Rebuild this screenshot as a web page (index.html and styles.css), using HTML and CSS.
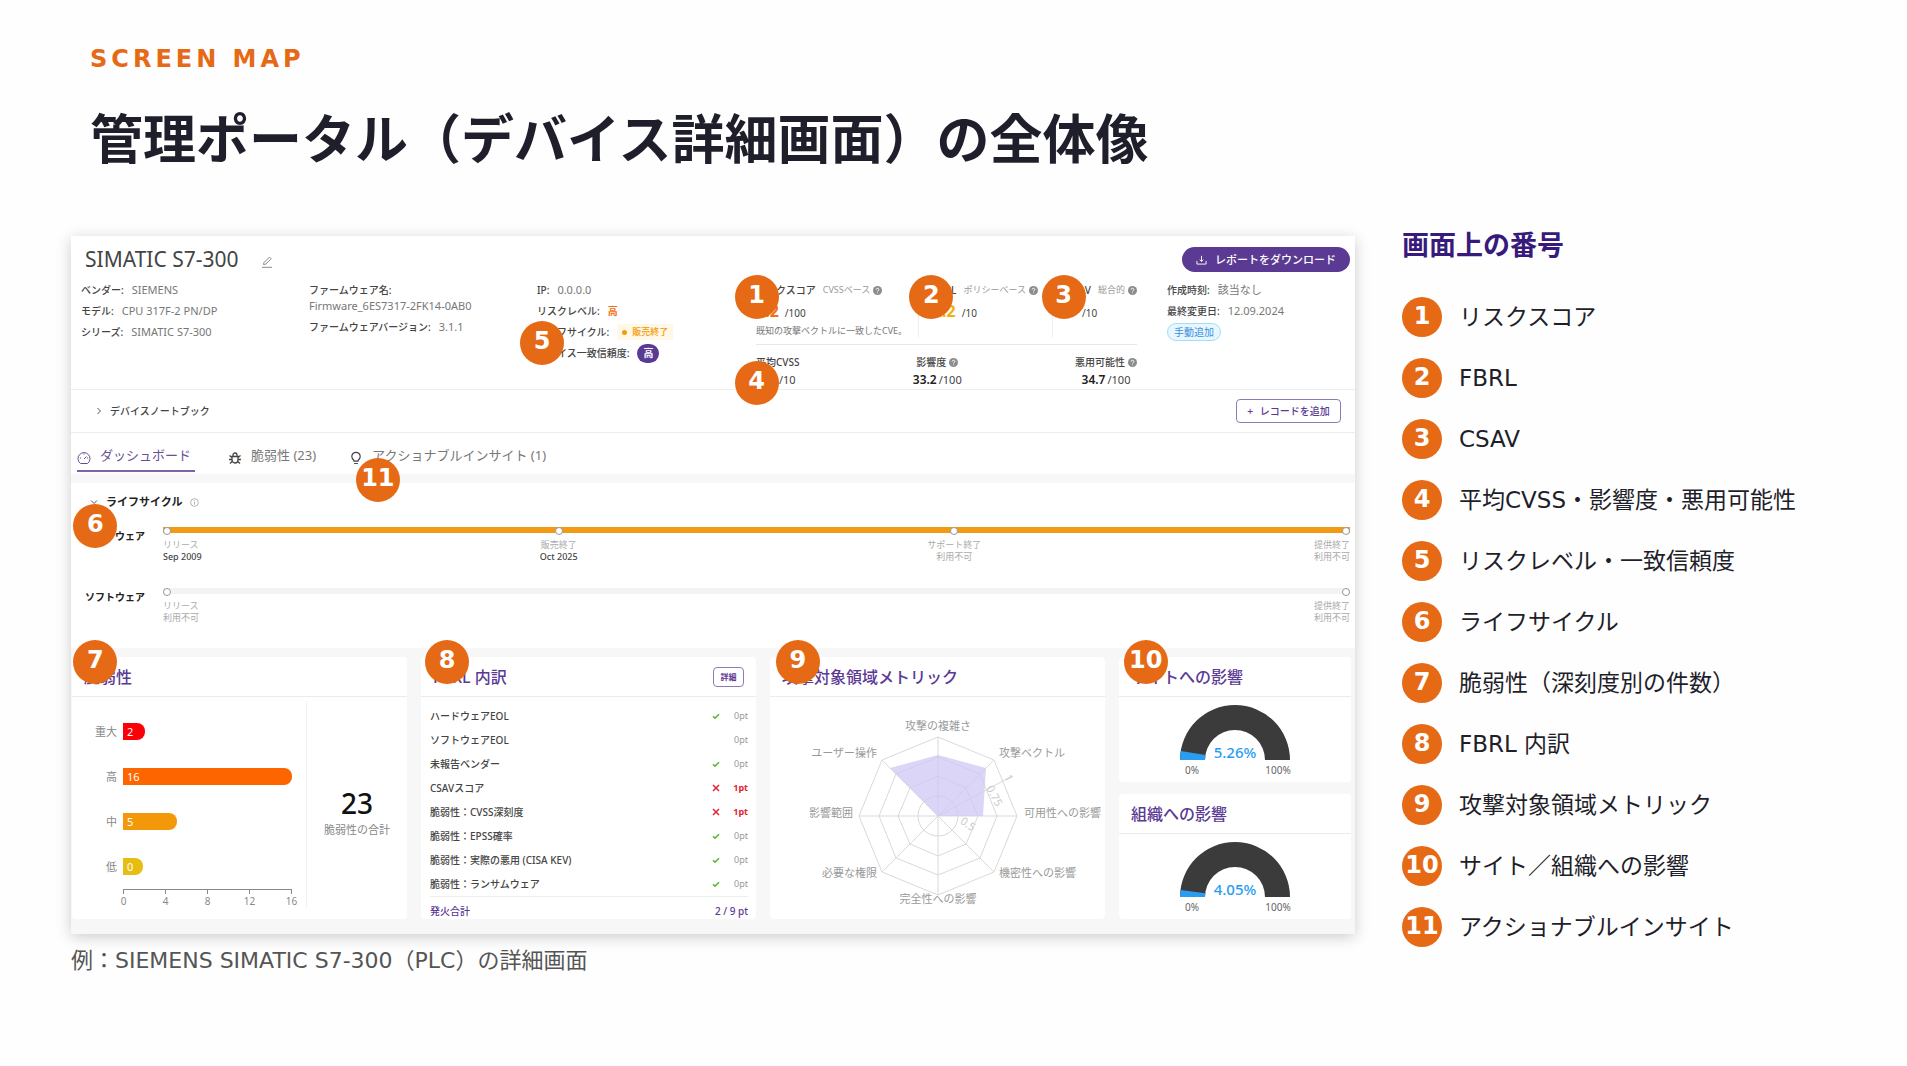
FILE: index.html
```html
<!DOCTYPE html>
<html lang="ja">
<head>
<meta charset="utf-8">
<meta name="viewport" content="width=device-width, initial-scale=1">
<title>管理ポータル（デバイス詳細画面）の全体像</title>
<link rel="stylesheet" href="styles.css">
</head>
<body>
<svg class="defs" width="0" height="0" aria-hidden="true">
  <symbol id="help" viewBox="0 0 10 10"><circle cx="5" cy="5" r="5" fill="#8c8c8c"/><path d="M3.500 4a1.500 1.500 0 1 1 2.200 1.300Q5 5.600 5 6.200M5 7.300v.8" fill="none" stroke="#fff" stroke-width="1"/></symbol>
  <symbol id="check" viewBox="0 0 8 8"><path d="M1 4.200 3 6.200 7 2.200" fill="none" stroke="#52b52a" stroke-width="1.500"/></symbol>
  <symbol id="cross" viewBox="0 0 8 8"><path d="M1 1l6 6M7 1 1 7" fill="none" stroke="#e0252f" stroke-width="1.500"/></symbol>
</svg>

<header class="head">
  <p class="eyebrow">SCREEN MAP</p>
  <h1>管理ポータル（デバイス詳細画面）の全体像</h1>
</header>

<main class="layout">
  <figure class="shot">
    <div class="portal">
      <section class="device">
        <div class="device-top">
          <h2>SIMATIC S7-300</h2>
          <svg class="pencil" viewBox="0 0 12 12" fill="none" stroke="#8a8a8a"><path d="M2.500 8.500 3 6.500 8.500 1l1.700 1.700-5.500 5.500zM1 11.300h10"/></svg>
          <button class="download" type="button"><svg viewBox="0 0 12 12" fill="none" stroke="#fff"><path d="M6 2v6M4 6.200l2 2 2-2M1 7.500V11h10V7.500"/></svg>レポートをダウンロード</button>
        </div>
        <div class="info">
          <dl>
            <div><dt>ベンダー:</dt><dd>SIEMENS</dd></div>
            <div><dt>モデル:</dt><dd>CPU 317F-2 PN/DP</dd></div>
            <div><dt>シリーズ:</dt><dd>SIMATIC S7-300</dd></div>
          </dl>
          <dl>
            <div class="stacked"><dt>ファームウェア名:</dt><dd>Firmware_6ES7317-2FK14-0AB0</dd></div>
            <div><dt>ファームウェアバージョン:</dt><dd>3.1.1</dd></div>
          </dl>
          <dl>
            <div><dt>IP:</dt><dd>0.0.0.0</dd></div>
            <div><dt>リスクレベル:</dt><dd class="level">高</dd></div>
            <div><dt>ライフサイクル:</dt><dd class="eos">販売終了</dd></div>
            <div><dt>デバイス一致信頼度:</dt><dd class="pill">高</dd></div>
          </dl>
          <div class="scores">
            <div class="score-row">
              <div class="score">
                <p class="score-name">リスクスコア <small>CVSSベース</small><svg class="help"><use href="#help"/></svg></p>
                <p class="score-value high"><b>7.2</b> /100</p>
                <p class="score-note">既知の攻撃ベクトルに一致したCVE。</p>
              </div>
              <div class="score">
                <p class="score-name">FBRL <small>ポリシーベース</small><svg class="help"><use href="#help"/></svg></p>
                <p class="score-value mid"><b>2.2</b> /10</p>
              </div>
              <div class="score">
                <p class="score-name">CSAV <small>総合的</small><svg class="help"><use href="#help"/></svg></p>
                <p class="score-value high"><b>8</b> /10</p>
              </div>
            </div>
            <div class="averages">
              <div><p>平均CVSS</p><p class="avg"><b>7.2</b>/10</p></div>
              <div><p>影響度<svg class="help"><use href="#help"/></svg></p><p class="avg"><b>33.2</b>/100</p></div>
              <div><p>悪用可能性<svg class="help"><use href="#help"/></svg></p><p class="avg"><b>34.7</b>/100</p></div>
            </div>
          </div>
          <dl>
            <div><dt>作成時刻:</dt><dd>該当なし</dd></div>
            <div><dt>最終変更日:</dt><dd>12.09.2024</dd></div>
            <div><dd class="manual">手動追加</dd></div>
          </dl>
        </div>
        <div class="notebook">
          <svg class="chev" viewBox="0 0 8 8" fill="none" stroke="#555"><path d="M2.500 1 5.500 4l-3 3"/></svg>
          <span>デバイスノートブック</span>
          <button class="add" type="button"><span>+</span>レコードを追加</button>
        </div>
        <nav class="tabs">
          <a class="tab active" href="#dashboard"><svg viewBox="0 0 14 14" fill="none" stroke="currentColor"><path d="M3.500 12.500a6 6 0 1 1 7 0zM7 8l2.500-2.500M7 2.500v1M3 7h1M10 7h1"/></svg>ダッシュボード</a>
          <a class="tab" href="#vulns"><svg viewBox="0 0 14 14" fill="none" stroke="#444" stroke-width="1.300"><path d="M4 5.500h6V9a3 3 0 0 1-6 0zM5 5.200V4a2 2 0 0 1 4 0v1.200M4 6.500 1.500 4.500M10 6.500l2.500-2M4 8.500H1M10 8.500h3M4.200 10.500 2 12.500M9.800 10.500l2.200 2"/></svg>脆弱性 (23)</a>
          <a class="tab" href="#insights"><svg viewBox="0 0 14 14" fill="none" stroke="#444" stroke-width="1.200"><path d="M5 10.200V9.500C4 8.500 2.800 7.500 2.800 5.500a4.200 4.200 0 0 1 8.400 0c0 2-1.200 3-2.200 4v.7zM5.200 12.500h3.600"/></svg>アクショナブルインサイト (1)</a>
        </nav>
      </section>

      <section class="lifecycle">
        <h3><svg class="chev" viewBox="0 0 8 8" fill="none" stroke="#555"><path d="M1 2.500 4 5.500l3-3"/></svg>ライフサイクル<svg class="i" viewBox="0 0 10 10" fill="none" stroke="#aaa"><circle cx="5" cy="5" r="4.300"/><path d="M5 4.300v3M5 2.500v1"/></svg></h3>
        <div class="track-row">
          <span>ハードウェア</span>
          <ol class="track on">
            <li>リリース<b>Sep 2009</b></li>
            <li>販売終了<b>Oct 2025</b></li>
            <li>サポート終了<i>利用不可</i></li>
            <li>提供終了<i>利用不可</i></li>
          </ol>
        </div>
        <div class="track-row">
          <span>ソフトウェア</span>
          <ol class="track">
            <li>リリース<i>利用不可</i></li>
            <li>提供終了<i>利用不可</i></li>
          </ol>
        </div>
      </section>

      <div class="cards">
        <section class="card">
          <h3>脆弱性</h3>
          <div class="vulns">
            <div class="bars">
              <div class="bar-row"><span>重大</span><div><b class="bar critical" style="width:13%">2</b></div></div>
              <div class="bar-row"><span>高</span><div><b class="bar major" style="width:100%">16</b></div></div>
              <div class="bar-row"><span>中</span><div><b class="bar medium" style="width:32%">5</b></div></div>
              <div class="bar-row"><span>低</span><div><b class="bar low" style="width:0%">0</b></div></div>
              <ol class="axis"><li>0</li><li>4</li><li>8</li><li>12</li><li>16</li></ol>
            </div>
            <div class="total"><strong>23</strong><span>脆弱性の合計</span></div>
          </div>
        </section>

        <section class="card">
          <h3>FBRL 内訳<button class="detail" type="button">詳細</button></h3>
          <table>
            <tbody>
              <tr><th scope="row">ハードウェアEOL</th><td><svg><use href="#check"/></svg></td><td>0pt</td></tr>
              <tr><th scope="row">ソフトウェアEOL</th><td></td><td>0pt</td></tr>
              <tr><th scope="row">未報告ベンダー</th><td><svg><use href="#check"/></svg></td><td>0pt</td></tr>
              <tr><th scope="row">CSAVスコア</th><td><svg><use href="#cross"/></svg></td><td class="hit">1pt</td></tr>
              <tr><th scope="row">脆弱性：CVSS深刻度</th><td><svg><use href="#cross"/></svg></td><td class="hit">1pt</td></tr>
              <tr><th scope="row">脆弱性：EPSS確率</th><td><svg><use href="#check"/></svg></td><td>0pt</td></tr>
              <tr><th scope="row">脆弱性：実際の悪用 (CISA KEV)</th><td><svg><use href="#check"/></svg></td><td>0pt</td></tr>
              <tr><th scope="row">脆弱性：ランサムウェア</th><td><svg><use href="#check"/></svg></td><td>0pt</td></tr>
            </tbody>
            <tfoot><tr><th scope="row">発火合計</th><td colspan="2">2 / 9 pt</td></tr></tfoot>
          </table>
        </section>

        <section class="card">
          <h3>攻撃対象領域メトリック</h3>
          <svg class="radar" viewBox="0 0 335 221">
            <g transform="translate(168 119)">
              <g fill="none" stroke="#d9d9d9">
                <path d="M0-79 56-56 79 0 56 56 0 79-56 56-79 0-56-56z"/>
                <path d="M0-59 42-42 59 0 42 42 0 59-42 42-59 0-42-42z"/>
                <path d="M0-40 28-28 40 0 28 28 0 40-28 28-40 0-28-28z"/>
                <circle r="20"/>
                <path d="M0-79V79M-79 0H79M-56-56 56 56M56-56-56 56M0 0 74-40"/>
              </g>
              <path d="M0-61 48-48 45 0 0 0-48-48z" fill="#cfc8f5" fill-opacity=".75"/>
              <g class="ticks"><text transform="translate(70 -41) rotate(62)">1</text><text transform="translate(52 -30) rotate(62)">0.75</text><text transform="translate(24 3) rotate(35)">0.5</text></g>
              <g text-anchor="middle"><text y="-91">攻撃の複雑さ</text><text y="82">完全性への影響</text></g>
              <g><text x="61" y="-64">攻撃ベクトル</text><text x="86" y="-4">可用性への影響</text><text x="61" y="56">機密性への影響</text></g>
              <g text-anchor="end"><text x="-61" y="-64">ユーザー操作</text><text x="-85" y="-4">影響範囲</text><text x="-61" y="56">必要な権限</text></g>
            </g>
          </svg>
        </section>

        <div class="impacts">
          <section class="card">
            <h3>サイトへの影響</h3>
            <svg class="gauge" viewBox="0 0 120 82">
              <path d="M5 63a55 55 0 0 1 110 0H90a30 30 0 0 0-60 0z" fill="#3b3b3b"/>
              <path d="M5 63a55 55 0 0 1 .8-9l24.600 4A30 30 0 0 0 30 63z" fill="#2a9df0"/>
              <text class="pct" x="60" y="61">5.26%</text><text x="17" y="77">0%</text><text x="103" y="77">100%</text>
            </svg>
          </section>
          <section class="card">
            <h3>組織への影響</h3>
            <svg class="gauge" viewBox="0 0 120 82">
              <path d="M5 63a55 55 0 0 1 110 0H90a30 30 0 0 0-60 0z" fill="#3b3b3b"/>
              <path d="M5 63a55 55 0 0 1 .5-7l24.700 3.200A30 30 0 0 0 30 63z" fill="#2a9df0"/>
              <text class="pct" x="60" y="61">4.05%</text><text x="17" y="77">0%</text><text x="103" y="77">100%</text>
            </svg>
          </section>
        </div>
      </div>

      <span class="pin" style="left:53.4%;top:8.8%">1</span>
      <span class="pin" style="left:67%;top:8.8%">2</span>
      <span class="pin" style="left:77.3%;top:8.8%">3</span>
      <span class="pin" style="left:53.4%;top:21%">4</span>
      <span class="pin" style="left:36.7%;top:15.4%">5</span>
      <span class="pin" style="left:1.9%;top:41.6%">6</span>
      <span class="pin" style="left:1.9%;top:61%">7</span>
      <span class="pin" style="left:29.3%;top:61%">8</span>
      <span class="pin" style="left:56.6%;top:61%">9</span>
      <span class="pin" style="left:83.7%;top:61%">10</span>
      <span class="pin" style="left:23.9%;top:35%">11</span>
    </div>
    <figcaption>例：SIEMENS SIMATIC S7-300（PLC）の詳細画面</figcaption>
  </figure>

  <aside class="legend">
    <h2>画面上の番号</h2>
    <ul>
      <li><b>1</b>リスクスコア</li>
      <li><b>2</b>FBRL</li>
      <li><b>3</b>CSAV</li>
      <li><b>4</b>平均CVSS・影響度・悪用可能性</li>
      <li><b>5</b>リスクレベル・一致信頼度</li>
      <li><b>6</b>ライフサイクル</li>
      <li><b>7</b>脆弱性（深刻度別の件数）</li>
      <li><b>8</b>FBRL 内訳</li>
      <li><b>9</b>攻撃対象領域メトリック</li>
      <li><b>10</b>サイト／組織への影響</li>
      <li><b>11</b>アクショナブルインサイト</li>
    </ul>
  </aside>
</main>
</body>
</html>
```
FILE: styles.css
```css
* { box-sizing: border-box; }
body, h1, h2, h3, p, dl, dd, ul, ol, figure { margin: 0; padding: 0; }
ul, ol { list-style: none; }
svg { flex: none; display: block; }
button { font: inherit; cursor: pointer; }

:root {
  --orange: #e66a16;
  --purple: #5b3a94;
  --slide: "DejaVu Sans", "Noto Sans CJK JP", sans-serif;
  --ui: "Noto Sans", "Noto Sans CJK JP", sans-serif;
}

body { background: #fefefe; color: #1f1f2b; font-family: var(--slide); }
.defs { position: absolute; }

.head { padding: 44px 90px 0; }
.eyebrow { color: var(--orange); font-size: 24px; font-weight: 700; line-height: 30px; letter-spacing: 4px; }
h1 { margin-top: 27px; font-size: 53px; line-height: 80px; font-weight: 700; }

.layout {
  display: grid;
  grid-template-columns: minmax(0, 3fr) minmax(0, 1fr);
  column-gap: 47px;
  padding: 55px 77px 40px 71px;
}

/* Portal screen */
.portal {
  position: relative;
  background: #f7f7f7;
  box-shadow: 0 3px 14px rgba(0, 0, 0, .2);
  font-family: var(--ui);
  font-size: 10px;
  line-height: 16px;
  color: #444;
  white-space: nowrap;
}
.device, .lifecycle, .card { background: #fff; }
.device-top { display: flex; align-items: center; height: 46px; padding: 11px 5px 10px 14px; }
.device-top h2 { font-size: 21px; line-height: 25px; font-weight: 400; }
.pencil { width: 12px; height: 12px; margin: 5px 0 0 22px; }
.download {
  display: flex; align-items: center; gap: 8px;
  height: 25px; margin-left: auto; padding: 0 14px;
  border: 0; border-radius: 13px;
  background: var(--purple); color: #fff; font-size: 11px; font-weight: 500;
}
.download svg { width: 11px; height: 11px; }

.info { display: grid; grid-template-columns: 228fr 228fr 219fr 411fr 188fr; padding-left: 10px; border-bottom: 1px solid #ededed; }
.info dl { display: flex; flex-direction: column; gap: 5px; }
.info dl div { display: flex; align-items: center; gap: 8px; height: 16px; }
.info dl .stacked { display: block; height: 32px; }
.info dt { font-weight: 500; }
.info dd { font-size: 11px; color: #777; }
.info .level { color: #f2700f; font-size: 10px; font-weight: 700; }
.info .eos { display: flex; align-items: center; gap: 5px; padding: 0 5px; background: #fff8e6; color: #f59a0c; font-size: 9px; font-weight: 500; }
.eos::before { content: ""; width: 5px; height: 5px; border-radius: 50%; background: #f59a0c; }
.info .pill { padding: 0 6px; border-radius: 10px; background: var(--purple); color: #fff; font-size: 10px; line-height: 19px; font-weight: 700; }
.info .manual { padding: 0 6px; border: 1px solid #a6dcf5; border-radius: 9px; background: #e6f7ff; color: #3d8fdc; font-size: 10px; line-height: 16px; }

.help { width: 9px; height: 9px; }
.scores { margin-right: 30px; }
.score-row { display: grid; grid-template-columns: 162fr 134fr 85fr; height: 63px; padding-bottom: 7px; border-bottom: 1px solid #e8e8e8; }
.score + .score { padding-left: 14px; border-left: 1px solid #eee; }
.score-name { display: flex; align-items: center; gap: 3px; font-weight: 500; }
.score-name small { margin-left: 4px; font-size: 9px; font-weight: 400; color: #999; }
.score-value { display: flex; align-items: baseline; gap: 6px; line-height: 26px; }
.score-value b { font-size: 16px; }
.high b { color: #f2700f; }
.mid b { color: #efb30e; }
.score-note { font-size: 9px; line-height: 10px; color: #777; }
.averages { display: flex; justify-content: space-between; padding-top: 9px; }
.averages div { display: flex; flex-direction: column; align-items: center; font-weight: 500; }
.averages p { display: flex; align-items: center; gap: 3px; }
.averages .avg { align-items: baseline; gap: 2px; margin-top: 1px; line-height: 18px; font-size: 11px; font-weight: 400; }
.avg b { font-size: 12px; color: #222; font-weight: 600; }

.notebook { display: flex; align-items: center; height: 43px; padding: 0 14px 0 24px; border-bottom: 1px solid #ededed; font-weight: 500; }
.chev { width: 8px; height: 8px; }
.notebook .chev { margin-right: 7px; }
.add { display: flex; align-items: center; justify-content: center; gap: 7px; width: 105px; height: 24px; margin-left: auto; padding: 0; border: 1px solid #8f7ab5; border-radius: 4px; background: #fff; color: var(--purple); font-weight: 500; }

.tabs { display: flex; gap: 33px; height: 41px; padding-left: 6px; }
.tab { display: flex; align-items: center; gap: 9px; height: 39px; padding-top: 5px; color: #777; font-size: 13px; text-decoration: none; }
.tab svg { width: 14px; height: 14px; margin-top: 5px; }
.tab.active { color: #67518f; border-bottom: 2px solid #7a64a3; padding: 7px 4px 0 0; }

.lifecycle { margin-top: 9px; padding: 11px 5px 24px 0; }
.lifecycle h3 { display: flex; align-items: center; gap: 8px; padding-left: 19px; margin-bottom: 17px; font-size: 11px; line-height: 16px; color: #222; }
.lifecycle .i { width: 9px; height: 9px; }
.track-row { display: grid; grid-template-columns: 74px 1fr; column-gap: 18px; }
.track-row + .track-row { margin-top: 25px; }
.track-row > span { padding-top: 1px; text-align: right; font-weight: 600; color: #222; }
.track { display: grid; grid-template-columns: repeat(6, 1fr); background: linear-gradient(#f3f3f3, #f3f3f3) no-repeat top / 100% 6px; font-size: 9px; line-height: 12px; color: #aaa; }
.track.on { background-image: linear-gradient(#f39a14, #f39a14); }
.track li { display: flex; flex-direction: column; align-items: center; grid-column: span 2; }
.track li::before { content: ""; width: 6px; height: 6px; margin-bottom: 4px; border: 1px solid #999; border-radius: 50%; background: #fff; }
.track li:first-child { grid-column: 1; align-items: flex-start; }
.track li:last-child { grid-column: 6; align-items: flex-end; }
.track b { color: #444; font-weight: 500; }
.track i { font-style: normal; }

.cards { display: grid; grid-template-columns: 335fr 335fr 335fr 232fr; gap: 14px; padding: 9px 4px 15px 1px; }
.card { border-radius: 4px; min-width: 0; min-height: 124px; }
.card h3 { display: flex; align-items: center; justify-content: space-between; height: 40px; padding: 0 12px; border-bottom: 1px solid #ebebeb; color: var(--purple); font-size: 16px; font-weight: 500; line-height: 22px; }
.detail { width: 31px; height: 20px; padding: 0; border: 1px solid #8f7ab5; border-radius: 4px; background: #fff; color: var(--purple); font-size: 8px; line-height: 16px; font-weight: 700; }

.vulns { display: grid; grid-template-columns: 235fr 100fr; padding-top: 4px; }
.bars { padding: 8px 14px 0 0; border-right: 1px solid #f2f2f2; }
.bar-row { display: grid; grid-template-columns: 45px 1fr; column-gap: 6px; align-items: center; height: 45px; color: #888; font-size: 11px; }
.bar-row > span { text-align: right; }
.bar { display: block; min-width: 20px; padding-left: 4px; border-radius: 0 8px 8px 0; color: #fff; font-weight: 400; line-height: 17px; }
.critical { background: #fb0007; }
.major { background: #fd6500; }
.medium { background: #f39809; }
.low { background: #e8bd12; }
.axis { display: flex; justify-content: space-between; margin-left: 51px; border-top: 1px solid #888; color: #888; font-size: 10px; line-height: 14px; }
.axis li { display: flex; flex-direction: column; align-items: center; width: 1px; }
.axis li::before { content: ""; width: 1px; height: 4px; background: #888; }
.total { display: flex; flex-direction: column; align-items: center; justify-content: center; color: #888; font-size: 11px; padding-top: 12px; }
.total strong { color: #111; font-size: 28px; line-height: 38px; font-weight: 500; }

table { width: 100%; padding: 7px 8px 0 9px; border-spacing: 0; }
th, td { height: 24px; padding: 0; }
th { text-align: left; font-weight: 500; }
td { text-align: right; color: #999; font-size: 9px; }
td svg { width: 8px; height: 8px; margin-left: auto; }
td:nth-child(3) { width: 28px; }
td.hit { color: #e0252f; font-weight: 700; }
tfoot th, tfoot td { height: 23px; padding-top: 5px; border-top: 1px solid #eee; color: var(--purple); font-size: 10px; font-weight: 500; }

.radar { width: 100%; }
.radar text { font-size: 11px; fill: #999; dominant-baseline: central; }
.radar .ticks text { fill: #ccc; }

.impacts { display: grid; gap: 12px; }
.gauge { width: 120px; margin: 0 auto; }
.gauge text { font-size: 10px; fill: #666; text-anchor: middle; }
.gauge .pct { font-size: 15px; font-weight: 500; fill: #2a9df0; }

/* Numbered markers */
.pin {
  position: absolute;
  width: 44px; height: 44px; margin: -22px 0 0 -22px;
  border-radius: 50%;
  background: var(--orange); color: #fff;
  font: 700 24px/40px var(--slide);
  text-align: center;
}

figcaption { margin-top: 11px; color: #555; font-size: 22px; line-height: 32px; }

.legend { margin-top: -9px; }
.legend h2 { margin-bottom: 33px; color: #371a7c; font-size: 27px; line-height: 37px; }
.legend ul { display: grid; gap: 21px; }
.legend li { display: flex; align-items: center; gap: 17px; font-size: 23px; line-height: 30px; white-space: nowrap; }
.legend b { width: 40px; height: 40px; border-radius: 50%; background: var(--orange); color: #fff; font-size: 24px; line-height: 38px; text-align: center; }
```
